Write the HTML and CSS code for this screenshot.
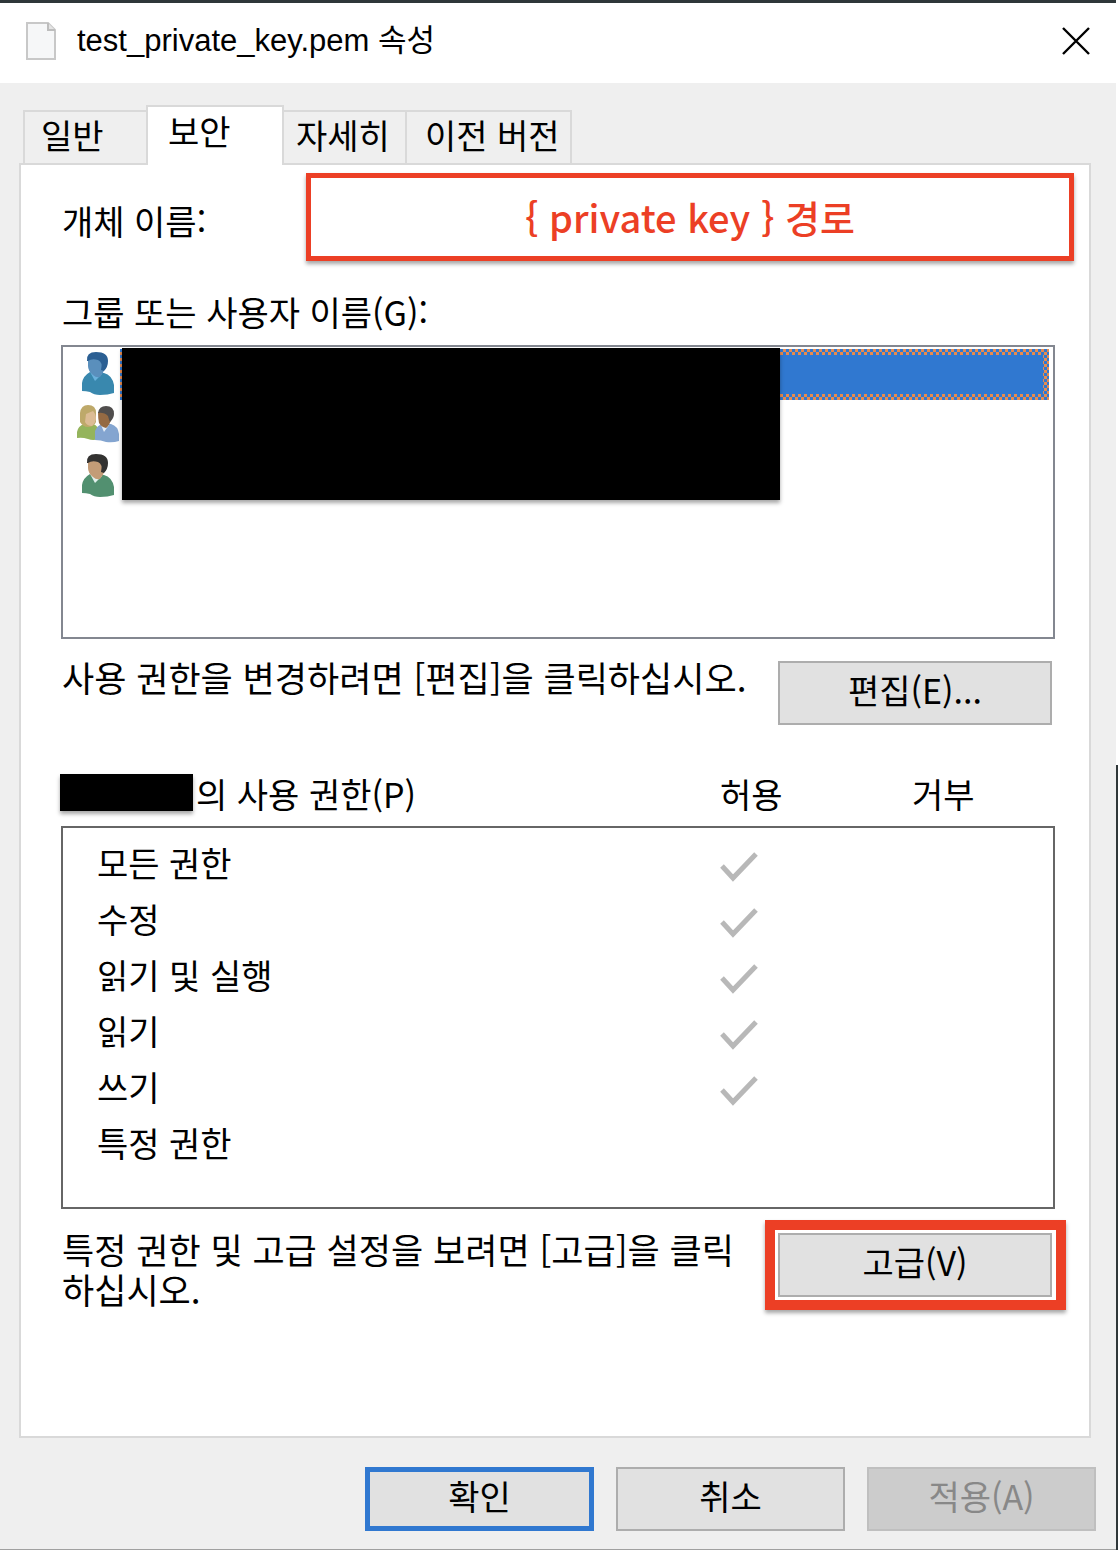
FILE: index.html
```html
<!DOCTYPE html>
<html lang="ko">
<head>
  <meta charset="UTF-8">
  <meta name="viewport" content="width=device-width, initial-scale=1.0">
  <title>test_private_key.pem 속성</title>
  <link rel="stylesheet" href="styles.css">
</head>
<body>
  <div class="window">
    <!-- Title bar -->
    <header class="titlebar">
      <svg class="file-icon" width="30" height="38" viewBox="0 0 30 38">
        <path d="M1 1h21l7 7v29H1z" fill="#f6f7f8" stroke="#c8c8c8" stroke-width="2"/>
        <path d="M22 1v7h7" fill="#e4e4e4" stroke="#bdbdbd" stroke-width="2"/>
      </svg>
      <h1>test_private_key.pem 속성</h1>
      <button type="button" class="close" aria-label="닫기">
        <svg width="30" height="30" viewBox="0 0 30 30">
          <path d="M2 2l26 26M28 2L2 28" stroke="#000" stroke-width="2.4" fill="none"/>
        </svg>
      </button>
    </header>

    <nav class="tabs" role="tablist">
      <button type="button" role="tab" class="tab tab-general">일반</button>
      <button type="button" role="tab" class="tab active" aria-selected="true">보안</button>
      <button type="button" role="tab" class="tab tab-details">자세히</button>
      <button type="button" role="tab" class="tab tab-versions">이전 버전</button>
    </nav>

    <main class="panel">
      <div class="object-row">
        <span class="object-label">개체 이름:</span>
        <div class="callout">{ private key } 경로</div>
      </div>

      <section class="section">
        <h2 class="users-label">그룹 또는 사용자 이름(G):</h2>
        <div class="user-list">
          <div class="user selected">
            <svg width="44" height="46" viewBox="0 0 44 46">
              <path d="M6 42V34q1-7 8-11l14 1q8 2 10 12v8q-6 2-14 2-6 0-10-3-4-1-8-1z" fill="#3988ae"/>
              <path d="M14 23l5 9 7-7z" fill="#6ab1dc"/>
              <path d="M12 9h17v10q-2 6-5 9-4 1-7-2-5-4-5-9z" fill="#5a8fbc"/>
              <path d="M11 12Q10 3 20 3q12 0 12 9 0 6-4 10l-3-1q2-8-3-10-6-2-10 1z" fill="#2b5f93"/>
            </svg>
            <span class="user-name"></span>
          </div>
          <div class="user">
            <svg width="44" height="46" viewBox="0 0 44 46">
              <path d="M1 38V32q1-6 7-8h9q6 2 6 9v6q-6 2-11 0-6-2-11-1z" fill="#94b45c"/>
              <path d="M4 22V13Q5 5 12 5q8 0 8 8v9q-2 5-8 5-5 0-8-5z" fill="#bea96a"/>
              <path d="M10 14l7-3q3 3 3 8-1 5-4 7-5 0-7-4z" fill="#dcbc95"/>
              <path d="M19 40V31q2-6 8-7h8q7 2 8 10v7q-6 2-13 1-5-2-11-2z" fill="#84a5d0"/>
              <path d="M25 25l3 7 5-7z" fill="#e5eef8"/>
              <path d="M22 12h13v8q-2 6-5 8-5-1-7-5-1-4-1-11z" fill="#946a43"/>
              <path d="M22 13q1-7 8-7 8 0 8 8 0 4-4 8-1-2-2-6-4-4-10-3z" fill="#504e4d"/>
            </svg>
            <span class="user-name"></span>
          </div>
          <div class="user">
            <svg width="44" height="46" viewBox="0 0 44 46">
              <path d="M6 42V34q1-7 8-11l14 1q8 2 10 12v8q-6 2-14 2-6 0-10-3-4-1-8-1z" fill="#529070"/>
              <path d="M14 23l5 9 7-7z" fill="#e2f0ed"/>
              <path d="M12 9h17v10q-2 6-5 9-4 1-7-2-5-4-5-9z" fill="#c39c77"/>
              <path d="M11 12Q10 3 20 3q12 0 12 9 0 6-4 10l-3-1q2-8-3-10-6-2-10 1z" fill="#333231"/>
            </svg>
            <span class="user-name"></span>
          </div>
          <div class="mask mask-users"></div>
        </div>

        <div class="edit-row">
          <p>사용 권한을 변경하려면 [편집]을 클릭하십시오.</p>
          <button type="button" class="btn btn-wide">편집(E)...</button>
        </div>

        <div class="perm-head">
          <div class="perm-owner"><span class="mask mask-owner"></span><span id="permLabel">의 사용 권한(P)</span></div>
          <span>허용</span>
          <span>거부</span>
        </div>
        <div class="perm-box">
          <table class="perm-table" aria-labelledby="permLabel">
            <tbody>
              <tr><td>모든 권한</td><td><svg class="check" viewBox="0 0 38 32"><path d="M2 15l11 12L36 3" /></svg></td><td></td></tr>
              <tr><td>수정</td><td><svg class="check" viewBox="0 0 38 32"><path d="M2 15l11 12L36 3" /></svg></td><td></td></tr>
              <tr><td>읽기 및 실행</td><td><svg class="check" viewBox="0 0 38 32"><path d="M2 15l11 12L36 3" /></svg></td><td></td></tr>
              <tr><td>읽기</td><td><svg class="check" viewBox="0 0 38 32"><path d="M2 15l11 12L36 3" /></svg></td><td></td></tr>
              <tr><td>쓰기</td><td><svg class="check" viewBox="0 0 38 32"><path d="M2 15l11 12L36 3" /></svg></td><td></td></tr>
              <tr><td>특정 권한</td><td></td><td></td></tr>
            </tbody>
          </table>
        </div>
      </section>

      <div class="advanced-row">
        <p>특정 권한 및 고급 설정을 보려면 [고급]을 클릭하십시오.</p>
        <div class="highlight">
          <button type="button" class="btn btn-wide">고급(V)</button>
        </div>
      </div>
    </main>

    <footer class="actions">
      <button type="button" class="btn btn-default">확인</button>
      <button type="button" class="btn">취소</button>
      <button type="button" class="btn" disabled>적용(A)</button>
    </footer>
  </div>
</body>
</html>
```

FILE: styles.css
```css
* {
  margin: 0;
  padding: 0;
  box-sizing: border-box;
}

body {
  /* desktop behind the window, seen along the right edge */
  background: linear-gradient(#fff 765px, #2f3739 765px);
  font-family: "Noto Sans CJK KR", sans-serif;
  font-size: 34px;
  line-height: 40px;
  color: #000;
}

button {
  font: inherit;
  color: inherit;
}

h1,
h2 {
  font-size: inherit;
  font-weight: 400;
}

.window {
  display: flex;
  flex-direction: column;
  min-height: 100vh;
  margin-right: 2px;
  background: #efefef;
  border-top: 3px solid #2f3739;
  border-bottom: 1px solid #a0a0a0;
}

/* Title bar */
.titlebar {
  display: flex;
  align-items: center;
  height: 80px;
  padding: 0 25px 4px 26px;
  background: #fff;
}

.titlebar h1 {
  flex: 1;
  margin-left: 21px;
  font-family: "Liberation Sans", "Noto Sans CJK KR", sans-serif;
  font-size: 31px;
}

.close {
  display: flex;
  border: none;
  background: none;
}

/* Tabs */
.tabs {
  display: flex;
  align-items: flex-end;
  padding: 22px 23px 0;
}

.tab {
  height: 55px;
  padding: 0 12px 5px;
  background: #efefef;
  border: 2px solid #d9d9d9;
  border-left: none;
  text-align: left;
}

.tab-general {
  width: 123px;
  padding-left: 16px;
  border-left: 2px solid #d9d9d9;
  border-right: none;
}

.tab.active {
  z-index: 1;
  width: 138px;
  height: 60px;
  padding: 0 20px 11px;
  background: #fff;
  border-left: 2px solid #d9d9d9;
  border-bottom: none;
}

.tab-details {
  width: 123px;
}

.tab-versions {
  width: 165px;
  padding-left: 18px;
  padding-right: 0;
  white-space: nowrap;
}

/* Tab page */
.panel {
  flex: 1;
  margin: -2px 25px 0 19px;
  padding: 8px 15px 20px 41px;
  background: #fff;
  border: 2px solid #d9d9d9;
}

.object-row {
  display: flex;
  align-items: center;
}

.object-label {
  width: 244px;
  padding-top: 8px;
}

.callout {
  flex: 1;
  height: 88px;
  border: 5px solid #ec3f25;
  box-shadow: 0 3px 4px rgba(0, 0, 0, 0.35);
  color: #ec3f25;
  font-size: 38px;
  font-weight: 500;
  line-height: 78px;
  text-align: center;
}

.section {
  margin-right: 19px;
}

.users-label {
  margin: 31px 0 13px;
}

/* Users */
.user-list {
  position: relative;
  height: 294px;
  margin-left: -1px;
  padding: 2px 4px;
  border: 2px solid #838790;
}

.user {
  display: flex;
  height: 51px;
}

.user svg {
  margin-left: 9px;
}

.user-name {
  flex: 1;
  height: 51px;
}

/* dotted focus rectangle around the selected name */
.selected .user-name {
  border: 6px solid transparent;
  background:
    linear-gradient(#3078d0, #3078d0) padding-box,
    repeating-conic-gradient(#e78b4e 0 25%, #3078d0 0 50%) 0 0 / 6px 6px border-box;
}

.mask {
  background: #000;
  box-shadow: 0 3px 4px rgba(0, 0, 0, 0.35);
}

.mask-users {
  position: absolute;
  top: 1px;
  left: 59px;
  width: calc(100% - 332px);
  height: 152px;
}

.edit-row {
  display: flex;
  justify-content: space-between;
  margin-top: 22px;
  padding-right: 3px;
}

.edit-row p,
.advanced-row p {
  font-size: 35px;
}

.edit-row p {
  margin-top: -4px;
}

/* Buttons */
.btn {
  width: 229px;
  height: 64px;
  padding-bottom: 6px;
  background: #e1e1e1;
  border: 2px solid #adadad;
}

.btn-wide {
  width: 274px;
}

.btn-default {
  border: 5px solid #3078d0;
}

.btn:disabled {
  background: #ccc;
  border-color: #bfbfbf;
  color: #888;
}

/* Permissions */
.perm-head {
  display: grid;
  grid-template-columns: 1fr 192px 143px;
  margin: 49px 0 12px;
}

.perm-owner {
  display: flex;
}

.mask-owner {
  width: 133px;
  height: 37px;
  margin-left: -2px;
  margin-right: 3px;
}

.perm-box {
  height: 383px;
  margin-left: -1px;
  padding: 7px 0;
  border: 2px solid #666;
}

.perm-table {
  width: 100%;
  table-layout: fixed;
  border-collapse: collapse;
}

.perm-table td {
  height: 56px;
  padding-left: 34px;
}

.perm-table td:nth-child(2),
.perm-table td:nth-child(3) {
  width: 192px;
  padding-left: 0;
}

.perm-table td:nth-child(3) {
  width: 141px;
}

.check {
  display: block;
  width: 38px;
  height: 40px;
  padding-top: 8px;
}

.check path {
  fill: none;
  stroke: #b8b8b8;
  stroke-width: 5;
}

.advanced-row {
  display: flex;
  justify-content: space-between;
  margin: 11px 8px 0 0;
}

.advanced-row p {
  width: 680px;
  padding-top: 9px;
  word-break: break-all;
}

.highlight {
  height: 90px;
  padding: 3px 4px 3px 3px;
  border: 10px solid #ec3f25;
  box-shadow: 0 3px 4px rgba(0, 0, 0, 0.35);
}

/* Bottom buttons */
.actions {
  display: flex;
  justify-content: flex-end;
  gap: 22px;
  padding: 29px 20px 18px;
}
```
